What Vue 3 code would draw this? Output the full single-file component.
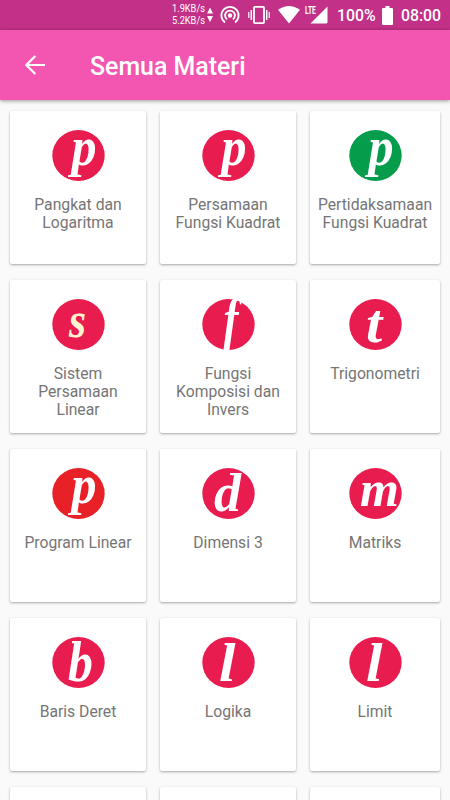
<script setup>
import { ref } from "vue";

// x / y / size / stretch place the letter inside the 53x51 badge
const letters = {
  p: { x: 19.5, y: 35, size: 54, stretch: 0.93, weight: 700 },
  s: { x: 17, y: 37.5, size: 51, stretch: 0.86, weight: 700 },
  f: { x: 21.5, y: 39, size: 56, stretch: 0.8, weight: 700 },
  t: { x: 17, y: 43, size: 54, stretch: 1.08, weight: 700 },
  d: { x: 12, y: 42.5, size: 54, stretch: 1, weight: 700 },
  m: { x: 11, y: 37.5, size: 51, stretch: 0.98, weight: 700 },
  b: { x: 16, y: 44, size: 58, stretch: 0.86, weight: 700 },
  l: { x: 17, y: 43.5, size: 55, stretch: 1.08, weight: 700 }
}

const topics = ref([
  { id: 1, lines: ["Pangkat dan", "Logaritma"], letter: "p", color: "#e81c4f" },
  { id: 2, lines: ["Persamaan", "Fungsi Kuadrat"], letter: "p", color: "#e81c4f" },
  { id: 3, lines: ["Pertidaksamaan", "Fungsi Kuadrat"], letter: "p", color: "#059c4b" },
  { id: 4, lines: ["Sistem", "Persamaan", "Linear"], letter: "s", color: "#e81c4f", ink: "#fff4cf" },
  { id: 5, lines: ["Fungsi", "Komposisi dan", "Invers"], letter: "f", color: "#e81c4f" },
  { id: 6, lines: ["Trigonometri"], letter: "t", color: "#e81c4f" },
  { id: 7, lines: ["Program Linear"], letter: "p", color: "#e82129" },
  { id: 8, lines: ["Dimensi 3"], letter: "d", color: "#e81c4f" },
  { id: 9, lines: ["Matriks"], letter: "m", color: "#e81c4f" },
  { id: 10, lines: ["Baris Deret"], letter: "b", color: "#e81c4f" },
  { id: 11, lines: ["Logika"], letter: "l", color: "#e81c4f" },
  { id: 12, lines: ["Limit"], letter: "l", color: "#e81c4f" },
  { id: 13, lines: [] },
  { id: 14, lines: [] },
  { id: 15, lines: [] }
])

const place = (letter) => {
  const l = letters[letter]
  return `translate(${l.x} ${l.y}) scale(${l.stretch} 1)`
}
</script>

<template>
  <div class="screen">
    <div class="statusBar">
      <div class="speed">
        <span>1.9KB/s</span>
        <span>5.2KB/s</span>
      </div>
      <svg class="arrows" width="6" height="16" viewBox="0 0 6 16">
        <path d="M3 0.5L6 6.5H0zM0 9H6L3 15z" fill="#fff" />
      </svg>
      <svg class="hotspot" width="20" height="20" viewBox="0 0 20 20" fill="none" stroke="#fff" stroke-width="1.8">
        <circle cx="10" cy="10.5" r="2.2" fill="#fff" stroke="none" />
        <path d="M7 14.4A4.9 4.9 0 1 1 13 14.4" />
        <path d="M5 17.4A8.6 8.6 0 1 1 15 17.4" />
      </svg>
      <svg class="vibrate" width="22" height="20" viewBox="0 0 22 20" fill="none" stroke="#fff">
        <rect x="6" y="1.9" width="10" height="16.2" rx="0.8" stroke-width="1.8" />
        <path d="M3.3 5V15M18.7 5V15" stroke-width="1.5" />
        <path d="M0.8 7V13M21.2 7V13" stroke-width="1.2" />
      </svg>
      <svg class="wifi" width="22" height="18" viewBox="0 0 22 18">
        <path d="M0 3.8Q11 -3.8 22 3.8L11 17.5z" fill="#fff" />
      </svg>
      <div class="signal">
        <span class="lte">LTE</span>
        <svg width="18" height="18" viewBox="0 0 18 18">
          <path d="M17.5 0.5V16Q17.5 17.5 16 17.5H0.5z" fill="#fff" />
        </svg>
      </div>
      <span class="percent">100%</span>
      <svg class="battery" width="11" height="19" viewBox="0 0 11 19">
        <path d="M3.5 0H7.5V2H10Q11 2 11 3V18Q11 19 10 19H1Q0 19 0 18V3Q0 2 1 2H3.5z" fill="#fff" />
      </svg>
      <span class="clock">08:00</span>
    </div>

    <header class="appBar">
      <svg class="back" width="20" height="20" viewBox="0 0 20 20" fill="none" stroke="#fff" stroke-width="2.2">
        <path d="M20 10H1.8M10.3 0.9L1.4 10L10.3 19.1" />
      </svg>
      <h1>Semua Materi</h1>
    </header>

    <main class="topicGrid">
      <div v-for="topic in topics" :key="topic.id" class="card">
        <svg v-if="topic.letter" class="badge" width="53" height="51" viewBox="0 0 53 51">
          <ellipse cx="26.5" cy="25.5" rx="26.2" ry="25.5" :fill="topic.color" />
          <text
            class="letter"
            :transform="place(topic.letter)"
            :font-size="letters[topic.letter].size"
            :font-weight="letters[topic.letter].weight"
            :fill="topic.ink || '#fff'"
          >{{ topic.letter }}</text>
        </svg>
        <p class="label">
          <span v-for="line in topic.lines" :key="line">{{ line }}</span>
        </p>
      </div>
    </main>
  </div>
</template>

<style>
body {
  background: #fafafa;
  overflow: hidden;
}
</style>

<style scoped>
.screen {
  width: 450px;
  height: 800px;
  overflow: hidden;
  background: #fafafa;
  font-family: Roboto, "Liberation Sans", sans-serif;
}

.statusBar {
  display: flex;
  align-items: center;
  justify-content: flex-end;
  box-sizing: border-box;
  height: 30px;
  padding-right: 10px;
  background: #c23087;
  color: #fff;
}
.speed {
  display: flex;
  flex-direction: column;
  width: 33px;
  font-size: 10.5px;
  line-height: 12px;
  white-space: nowrap;
}
.speed span {
  width: 37px;
  transform: scaleX(0.88);
  transform-origin: left;
}
.arrows {
  margin-left: 2px;
}
.hotspot {
  margin-left: 7px;
}
.vibrate {
  margin-left: 8px;
}
.wifi {
  margin-left: 8px;
}
.signal {
  display: flex;
  justify-content: flex-end;
  position: relative;
  width: 23px;
  margin-left: 5px;
}
.lte {
  position: absolute;
  left: 0;
  top: 0;
  font-size: 10.5px;
  font-weight: 700;
  line-height: 10px;
  transform: scaleX(0.64);
  transform-origin: left;
}
.percent {
  width: 37px;
  margin-left: 9px;
  font-size: 15.8px;
  font-weight: 500;
}
.battery {
  margin-left: 8px;
}
.clock {
  width: 39px;
  margin-left: 8px;
  font-size: 15.8px;
  font-weight: 500;
}

.appBar {
  position: relative;
  display: flex;
  align-items: center;
  height: 70px;
  padding-left: 25px;
  background: #f356b1;
  box-shadow: 0 1px 4px rgba(0, 0, 0, 0.4);
}
.appBar h1 {
  margin: 3px 0 0 45px;
  color: #fff;
  font-size: 24.9px;
  font-weight: 500;
  line-height: 30px;
}

.topicGrid {
  display: grid;
  grid-template-columns: 136px 136px 130px;
  grid-auto-rows: 153px;
  column-gap: 14px;
  row-gap: 16px;
  padding: 11px 10px 0;
}
.card {
  display: flex;
  flex-direction: column;
  align-items: center;
  background: #fff;
  border-radius: 2px;
  box-shadow: 0 1px 2.5px rgba(0, 0, 0, 0.34);
}
.badge {
  flex: none;
  margin-top: 19px;
  overflow: visible;
}
.letter {
  font-family: "Liberation Serif", serif;
  font-style: italic;
}
.label {
  display: flex;
  flex-direction: column;
  align-items: center;
  margin: 15px 0 0;
  color: #757575;
  font-size: 15.7px;
  line-height: 18px;
  white-space: nowrap;
}
</style>
